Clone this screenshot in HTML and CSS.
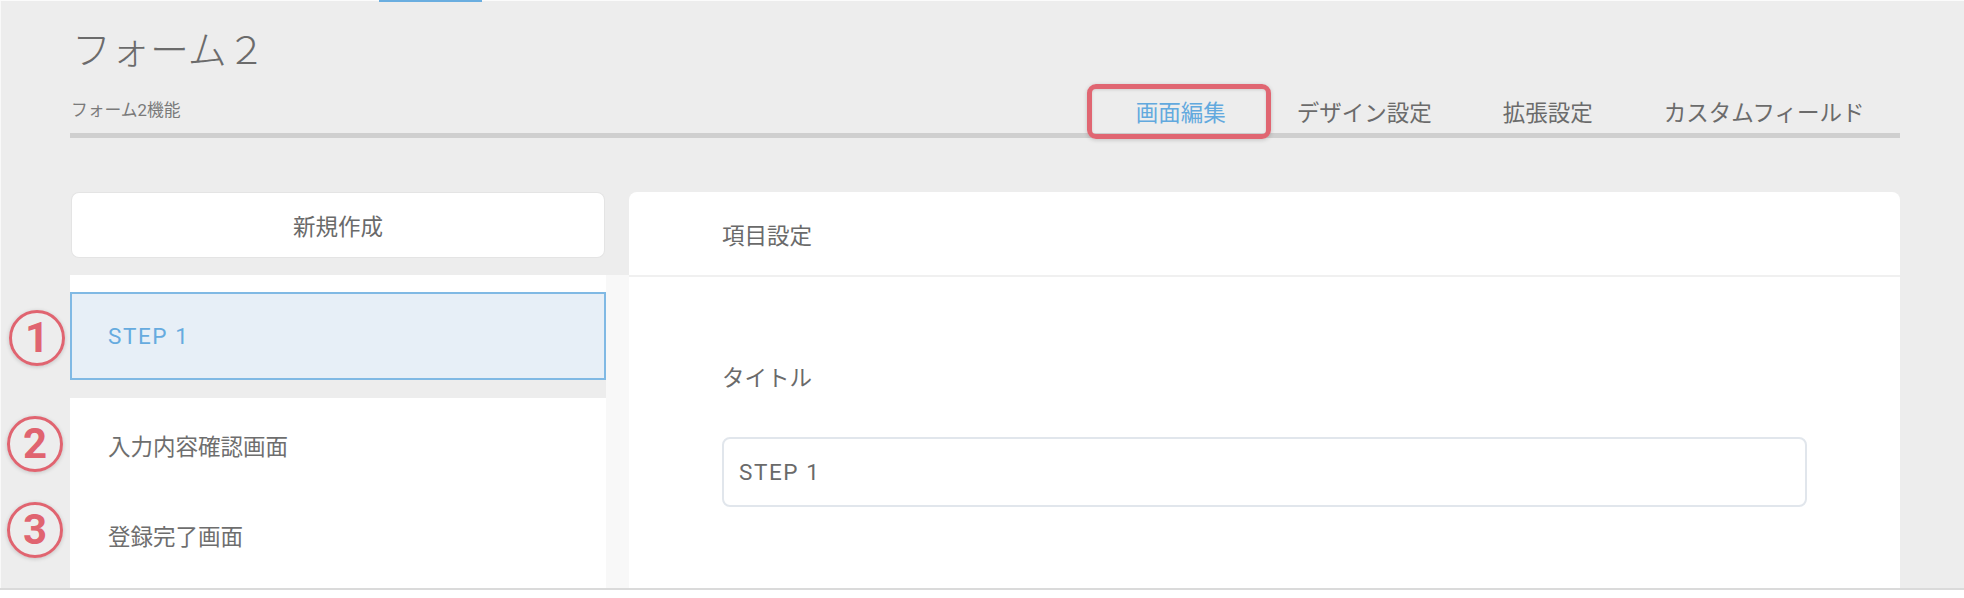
FILE: index.html
```html
<!DOCTYPE html>
<html lang="ja">
<head>
<meta charset="utf-8">
<title>フォーム２</title>
<link rel="stylesheet" href="styles.css">
</head>
<body>
<div class="screen">
  <div class="topbar"><div class="topbar-active"></div></div>
  <div class="page">
    <h1 class="title">フォーム２</h1>
    <div class="nav-row">
      <div class="subtitle">フォーム2機能</div>
      <nav class="tabs">
        <div class="tab tab-active">画面編集</div>
        <div class="tab">デザイン設定</div>
        <div class="tab">拡張設定</div>
        <div class="tab">カスタムフィールド</div>
      </nav>
    </div>
    <div class="main">
      <aside class="sidebar">
        <div class="new-btn">新規作成</div>
        <div class="list">
          <div class="list-inner">
            <div class="group-selected">
              <div class="item item-selected"><span class="latin">STEP 1</span><span class="mark mark-1">1</span></div>
            </div>
            <div class="group-rest">
              <div class="item">入力内容確認画面<span class="mark mark-2">2</span></div>
              <div class="item">登録完了画面<span class="mark mark-3">3</span></div>
            </div>
          </div>
        </div>
      </aside>
      <section class="card">
        <div class="card-head">項目設定</div>
        <div class="card-body">
          <div class="field-label">タイトル</div>
          <input class="field-input" type="text" value="STEP 1">
        </div>
      </section>
    </div>
  </div>
</div>
<div class="footer"></div>
</body>
</html>
```
FILE: styles.css
```css
* { box-sizing: border-box; }
html, body { margin: 0; padding: 0; }
body {
  background: #fff;
  font-family: "Roboto", "Noto Sans CJK JP", sans-serif;
  color: #6a6a6a;
}
.screen {
  height: 588px;
  overflow: hidden;
  background: #ededed;
  box-shadow: inset 1px 0 0 #f9f9f9;
}
.topbar {
  height: 2px;
  padding-left: 379px;
  background: linear-gradient(#fbfbfb 0 1px, transparent 1px);
}
.topbar-active {
  width: 103px;
  height: 2px;
  background: #6aaee0;
}
.page {
  padding: 0 64px 0 70px;
}
.title {
  margin: 0;
  padding: 27px 0 0 2px;
  font-size: 39px;
  line-height: 44px;
  font-weight: 300;
  color: #6b6b6b;
}
.nav-row {
  margin-top: 20px;
  display: flex;
  align-items: flex-end;
  justify-content: space-between;
  border-bottom: 5px solid #cfcfcf;
}
.subtitle {
  font-size: 16.8px;
  line-height: 20px;
  margin: 0 0 13px 1px;
  color: #7a7a7a;
}
.tabs {
  display: flex;
}
.tab {
  position: relative;
  padding: 0 35.5px;
  font-size: 22.5px;
  line-height: 40px;
  color: #6b6b6b;
  white-space: nowrap;
}
.tab-active {
  color: #62a9de;
}
.tab-active::after {
  content: "";
  position: absolute;
  left: -13px;
  right: -10px;
  top: -9px;
  bottom: -6px;
  border: 5px solid #e06672;
  border-radius: 9px;
  box-shadow: 0 1px 4px rgba(0, 0, 0, 0.18), inset 0 1px 3px rgba(0, 0, 0, 0.12);
  z-index: 2;
}
.main {
  margin-top: 54px;
  display: flex;
  align-items: flex-start;
}
.sidebar {
  width: 559px;
  flex: none;
  display: flex;
  flex-direction: column;
  height: 400px;
}
.new-btn {
  margin: 1px 25px 0 2px;
  height: 64px;
  background: #fff;
  border-radius: 7px;
  box-shadow: 0 0 0 1px #e4e4e4;
  display: flex;
  align-items: center;
  justify-content: center;
  font-size: 22.5px;
  color: #6a6a6a;
}
.list {
  margin-top: 18px;
  flex: 1;
  background: #f8f8f8;
  padding-right: 23px;
  display: flex;
}
.list-inner {
  flex: 1;
  background: #ededed;
  display: flex;
  flex-direction: column;
}
.group-selected {
  background: #fff;
  padding-top: 17px;
}
.group-rest {
  margin-top: 18px;
  background: #fff;
  flex: 1;
}
.item {
  position: relative;
  height: 90px;
  padding: 4px 0 0 38px;
  display: flex;
  align-items: center;
  font-size: 22.5px;
  color: #6e6e6e;
}
.item-selected {
  height: 88px;
  padding: 0 0 0 36px;
  background: #e7eff7;
  border: 2px solid #80b9e4;
  color: #66abdf;
}
.latin {
  letter-spacing: 1.6px;
}
.mark {
  position: absolute;
  width: 56px;
  height: 56px;
  border: 3px solid #e06470;
  border-radius: 50%;
  display: flex;
  align-items: center;
  justify-content: center;
  font-family: "Roboto", sans-serif;
  font-weight: 700;
  font-size: 42px;
  line-height: 1;
  letter-spacing: 0;
  color: #e06470;
  box-shadow: 0 1px 4px rgba(0, 0, 0, 0.18);
}
.mark-1 { top: 16px; left: -63px; }
.mark-2 { top: 18px; left: -63px; }
.mark-3 { top: 14px; left: -63px; }
.card {
  width: 1271px;
  flex: none;
  height: 400px;
  background: #fff;
  border-radius: 8px 8px 0 0;
}
.card-head {
  height: 85px;
  padding-left: 93px;
  display: flex;
  align-items: center;
  font-size: 22.5px;
  color: #6a6a6a;
  border-bottom: 2px solid #f0f0f0;
}
.card-body {
  padding: 86px 93px 0;
}
.field-label {
  font-size: 22.5px;
  line-height: 30px;
  color: #6a6a6a;
}
.field-input {
  display: block;
  margin-top: 44px;
  width: 100%;
  height: 70px;
  border: 2px solid #e1e6ec;
  border-radius: 8px;
  padding: 0 15px;
  font-family: "Roboto", "Noto Sans CJK JP", sans-serif;
  font-size: 22.5px;
  letter-spacing: 1.6px;
  color: #6a6a6a;
  background: #fff;
  outline: none;
}
.footer {
  height: 10px;
  border-top: 2px solid #dadada;
  background: #fff;
}
```
